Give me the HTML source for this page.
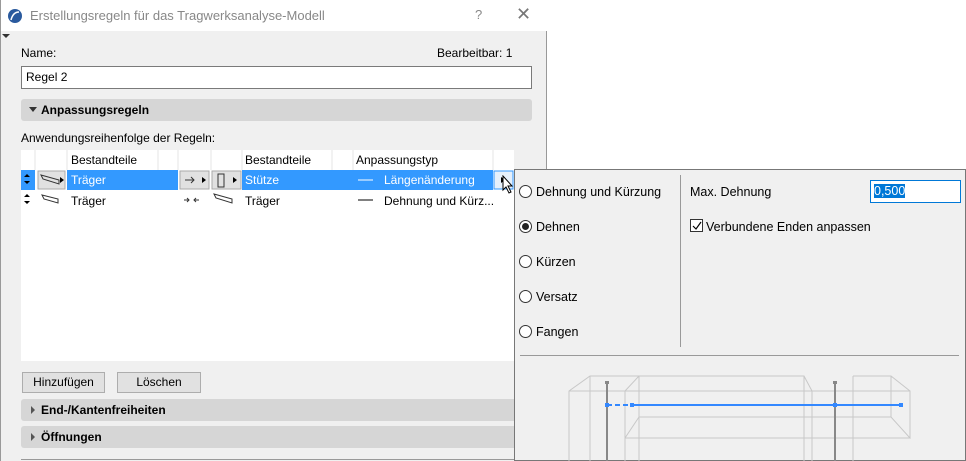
<!DOCTYPE html>
<html><head><meta charset="utf-8"><style>
*{margin:0;padding:0;box-sizing:border-box}
body{width:966px;height:461px;background:#fff;position:relative;overflow:hidden;font-family:"Liberation Sans","DejaVu Sans",sans-serif;font-size:12px;color:#000}
.a{position:absolute;white-space:nowrap}
.dlg{position:absolute;left:0;top:0;width:547px;height:461px;background:#f0f0f0;border-left:1px solid #999;border-right:1px solid #999}
.bar{position:absolute;left:20px;width:511px;height:22px;background:#d6d6d6;border-radius:3px;font-weight:bold;font-size:12px;line-height:22px;padding-left:20px}
.btn{position:absolute;height:21px;border:1px solid #adadad;background:#e1e1e1;text-align:center;line-height:19px}
.radio{position:absolute;left:519px;width:13px;height:13px;border:1px solid #333;border-radius:50%;background:#fff}
</style></head><body>
<div class="dlg">
 <div class="a" style="left:0;top:0;width:546px;height:31px;background:#fff"></div>
 <svg class="a" style="left:6px;top:8px" width="16" height="16"><circle cx="8" cy="8" r="7" fill="#2a5a9e"/><path d="M4 12 Q6 4 12 4" stroke="#fff" stroke-width="1.5" fill="none"/></svg>
 <div class="a" style="left:29px;top:8px;font-size:13px;color:#888">Erstellungsregeln für das Tragwerksanalyse-Modell</div>
 <div class="a" style="left:474px;top:7px;font-size:13px;color:#888">?</div>
 <div class="a" style="left:515px;top:4px;font-size:18px;color:#777">✕</div>
 <div class="a" style="left:1px;top:34px;width:0;height:0;border-left:4px solid transparent;border-right:4px solid transparent;border-top:4px solid #333"></div>
 <div class="a" style="left:20px;top:46px">Name:</div>
 <div class="a" style="left:436px;top:46px">Bearbeitbar: 1</div>
 <div class="a" style="left:20px;top:66px;width:511px;height:23px;background:#fff;border:1px solid #7a7a7a;padding-left:4px;line-height:21px">Regel 2</div>
 <div class="bar" style="top:99px">Anpassungsregeln</div>
 <div class="a" style="left:28px;top:107px;border-left:4px solid transparent;border-right:4px solid transparent;border-top:5px solid #333"></div>
 <div class="a" style="left:20px;top:131px">Anwendungsreihenfolge der Regeln:</div>
 <div class="a" style="left:20px;top:150px;width:493px;height:211px;background:#fff"></div>
 <svg class="a" style="left:20px;top:150px" width="494" height="61">
  <g stroke="#e6e6e6"><path d="M14 0V20M46 0V20M137 0V20M157 0V20M190 0V20M221 0V20M311 0V20M332 0V20M472 0V20"/></g>
  <rect x="0" y="20" width="14" height="20" fill="#3399ff"/>
  <rect x="46" y="20" width="111" height="20" fill="#3399ff"/>
  <rect x="221" y="20" width="251" height="20" fill="#3399ff"/>
  <rect x="157" y="20" width="64" height="20" fill="#fff"/>
  <rect x="17" y="21" width="27" height="18" fill="#e1e1e1" stroke="#aaa"/>
  <rect x="159" y="21" width="29" height="18" fill="#e1e1e1" stroke="#aaa"/>
  <rect x="191" y="21" width="29" height="18" fill="#e1e1e1" stroke="#aaa"/>
  <rect x="473" y="21" width="19" height="18" fill="#e6f0fb" stroke="#3399ff"/>
  <path d="M3 27l3-3 3 3zM3 31l3 3 3-3z" fill="#000"/>
  <path d="M3 47l3-3 3 3zM3 51l3 3 3-3z" fill="#000"/>
  <g stroke="#333" fill="none"><path d="M20 25l18 5v4l-16-5zM21 45l16 4v4l-14-4z"/><path d="M197 24h6v13h-6zM193 44l18 5v4l-16-5z"/>
  <path d="M164 30h9M170 27l3 3-3 3M163 50h5M166 48l2 2-2 2M178 50h-5M175 48l-2 2 2 2"/></g>
  <path d="M39 27l4 3-4 3zM181 27l4 3-4 3zM212 27l4 3-4 3zM480 27l4 3-4 3z" fill="#000"/>
  <path d="M337 30h15M337 50h15" stroke="#000"/><path d="M337 30h15" stroke="#fff"/>
 </svg>
 <div class="a" style="left:70px;top:153px">Bestandteile</div>
 <div class="a" style="left:244px;top:153px">Bestandteile</div>
 <div class="a" style="left:355px;top:153px">Anpassungstyp</div>
 <div class="a" style="left:70px;top:173px;color:#fff">Träger</div>
 <div class="a" style="left:244px;top:173px;color:#fff">Stütze</div>
 <div class="a" style="left:383px;top:173px;color:#fff">Längenänderung</div>
 <div class="a" style="left:70px;top:194px">Träger</div>
 <div class="a" style="left:244px;top:194px">Träger</div>
 <div class="a" style="left:383px;top:194px">Dehnung und Kürz...</div>
 <div class="btn" style="left:21px;top:372px;width:83px">Hinzufügen</div>
 <div class="btn" style="left:116px;top:372px;width:84px">Löschen</div>
 <div class="bar" style="top:399px">End-/Kantenfreiheiten</div>
 <div class="a" style="left:30px;top:406px;border-top:4px solid transparent;border-bottom:4px solid transparent;border-left:4px solid #555"></div>
 <div class="bar" style="top:426px">Öffnungen</div>
 <div class="a" style="left:30px;top:433px;border-top:4px solid transparent;border-bottom:4px solid transparent;border-left:4px solid #555"></div>
 <div class="a" style="left:20px;top:459px;width:511px;height:1px;background:#999"></div>
</div>
<div class="a" style="left:514px;top:169px;width:452px;height:292px;background:#f0f0f0;border:1px solid #777"></div>
<svg class="a" style="left:500px;top:175px" width="20" height="24"><path d="M3 1v14l3-3 3 6 2-1-3-6h4z" fill="#fff" stroke="#000"/></svg>
<div class="radio" style="top:185px"></div><div class="a" style="left:536px;top:185px;font-size:12.5px">Dehnung und Kürzung</div>
<div class="radio" style="top:220px"><div style="margin:2px;width:7px;height:7px;border-radius:50%;background:#222"></div></div><div class="a" style="left:536px;top:220px;font-size:12.5px">Dehnen</div>
<div class="radio" style="top:255px"></div><div class="a" style="left:536px;top:255px;font-size:12.5px">Kürzen</div>
<div class="radio" style="top:290px"></div><div class="a" style="left:536px;top:290px;font-size:12.5px">Versatz</div>
<div class="radio" style="top:325px"></div><div class="a" style="left:536px;top:325px;font-size:12.5px">Fangen</div>
<div class="a" style="left:680px;top:175px;width:1px;height:172px;background:#999"></div>
<div class="a" style="left:520px;top:355px;width:439px;height:1px;background:#999"></div>
<div class="a" style="left:690px;top:185px;font-size:12.5px">Max. Dehnung</div>
<div class="a" style="left:870px;top:180px;width:91px;height:23px;background:#fff;border:1px solid #0078d7;padding:3px 0 0 3px"><span style="background:#0078d7;color:#fff;font-size:12.5px">0,500</span></div>
<div class="a" style="left:690px;top:219px;width:13px;height:13px;border:1px solid #333;background:#fff"></div>
<svg class="a" style="left:690px;top:219px" width="14" height="14"><path d="M3 7l3 3 5-7" stroke="#000" fill="none" stroke-width="1.2"/></svg>
<div class="a" style="left:706px;top:220px;font-size:12.5px">Verbundene Enden anpassen</div>
<svg class="a" style="left:510px;top:320px" width="456" height="141">
 <g stroke="#c8c8c8" fill="none">
  <path d="M59 141V71L80 56H129L115 71M80 56V141M115 71V141M129 56V141M115 71H400V118M129 56H294L302 71M294 56V141M302 71V141M343 56H381L400 71M343 56V141M381 56V97M115 118L129 97H381L400 118H115"/>
  <path d="M59 71H115"/>
 </g>
 <path d="M97 62V141M325 62V141" stroke="#888" stroke-width="2"/>
 <rect x="95" y="61" width="4" height="3" fill="#888"/><rect x="323" y="61" width="4" height="3" fill="#888"/>
 <path d="M97 85H118" stroke="#3388ff" stroke-width="2" stroke-dasharray="5 3"/>
 <path d="M122 85H391" stroke="#3388ff" stroke-width="2"/>
 <rect x="95" y="83" width="4" height="4" fill="#3388ff"/><rect x="120" y="83" width="4" height="4" fill="#3388ff"/><rect x="323" y="83" width="4" height="4" fill="#3388ff"/><rect x="389" y="83" width="4" height="4" fill="#3388ff"/>
</svg>
</body></html>
